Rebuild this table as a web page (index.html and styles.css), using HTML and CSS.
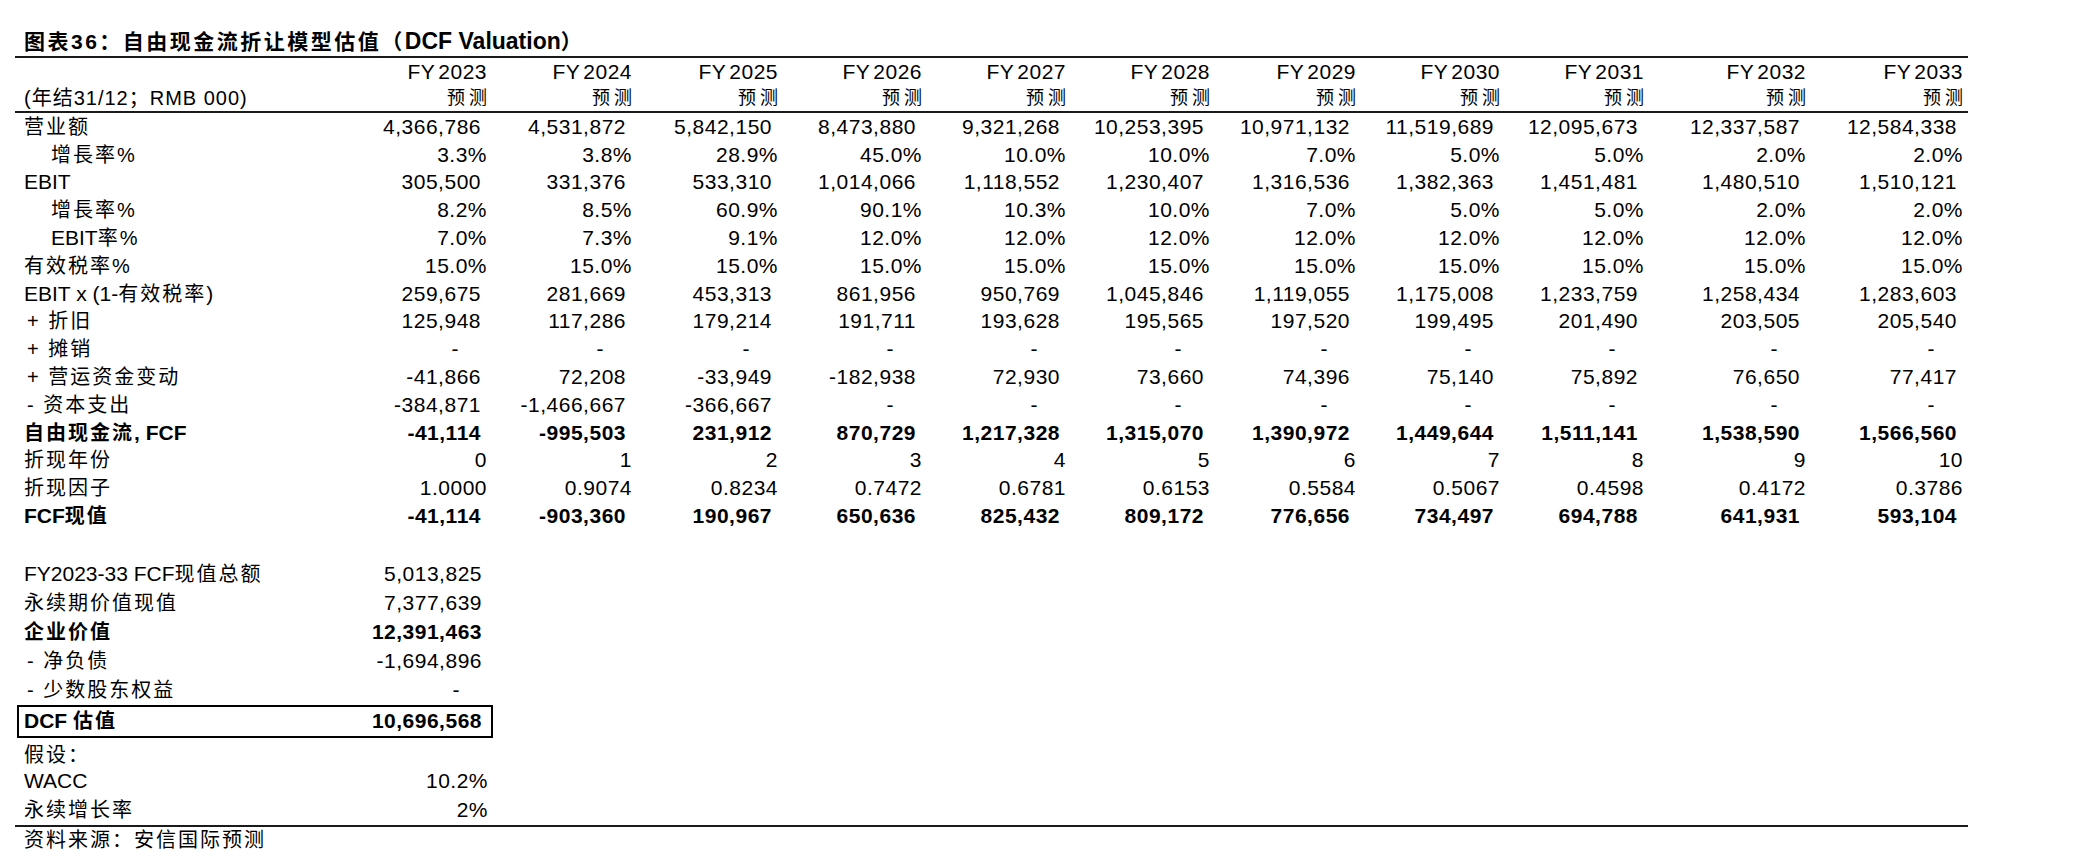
FILE: index.html
```html
<!DOCTYPE html>
<html lang="zh">
<head>
<meta charset="UTF-8" />
<title>自由现金流折让模型估值（DCF Valuation）</title>
<link rel="stylesheet" href="styles.css">
</head>
<body>

<div class="report">
  <h1 class="title">图表36：自由现金流折让模型估值（<span class="lat">DCF Valuation</span>）</h1>

  <!-- main forecast table -->
  <table class="dcf">
    <colgroup>
      <col class="c-label"><col class="c145"><col class="c145"><col class="c146"><col class="c144"><col class="c144"><col class="c144"><col class="c146"><col class="c144"><col class="c144"><col class="c162"><col class="c157">
    </colgroup>
    <thead>
      <tr class="yr">
        <th class="lbl"></th>
        <th>FY 2023</th><th>FY 2024</th><th>FY 2025</th><th>FY 2026</th><th>FY 2027</th><th>FY 2028</th><th>FY 2029</th><th>FY 2030</th><th>FY 2031</th><th>FY 2032</th><th>FY 2033</th>
      </tr>
      <tr class="fc">
        <th class="lbl unit">(年结31/12；RMB 000)</th>
        <th>预测</th><th>预测</th><th>预测</th><th>预测</th><th>预测</th><th>预测</th><th>预测</th><th>预测</th><th>预测</th><th>预测</th><th>预测</th>
      </tr>
    </thead>
    <tbody>
      <tr>
        <td class="lbl">营业额</td>
        <td class="n">4,366,786</td><td class="n">4,531,872</td><td class="n">5,842,150</td><td class="n">8,473,880</td><td class="n">9,321,268</td><td class="n">10,253,395</td><td class="n">10,971,132</td><td class="n">11,519,689</td><td class="n">12,095,673</td><td class="n">12,337,587</td><td class="n">12,584,338</td>
      </tr>
      <tr>
        <td class="lbl in">增長率%</td>
        <td>3.3%</td><td>3.8%</td><td>28.9%</td><td>45.0%</td><td>10.0%</td><td>10.0%</td><td>7.0%</td><td>5.0%</td><td>5.0%</td><td>2.0%</td><td>2.0%</td>
      </tr>
      <tr>
        <td class="lbl"><span class="lat">EBIT</span></td>
        <td class="n">305,500</td><td class="n">331,376</td><td class="n">533,310</td><td class="n">1,014,066</td><td class="n">1,118,552</td><td class="n">1,230,407</td><td class="n">1,316,536</td><td class="n">1,382,363</td><td class="n">1,451,481</td><td class="n">1,480,510</td><td class="n">1,510,121</td>
      </tr>
      <tr>
        <td class="lbl in">增長率%</td>
        <td>8.2%</td><td>8.5%</td><td>60.9%</td><td>90.1%</td><td>10.3%</td><td>10.0%</td><td>7.0%</td><td>5.0%</td><td>5.0%</td><td>2.0%</td><td>2.0%</td>
      </tr>
      <tr>
        <td class="lbl in"><span class="lat">EBIT</span>率%</td>
        <td>7.0%</td><td>7.3%</td><td>9.1%</td><td>12.0%</td><td>12.0%</td><td>12.0%</td><td>12.0%</td><td>12.0%</td><td>12.0%</td><td>12.0%</td><td>12.0%</td>
      </tr>
      <tr>
        <td class="lbl">有效税率%</td>
        <td>15.0%</td><td>15.0%</td><td>15.0%</td><td>15.0%</td><td>15.0%</td><td>15.0%</td><td>15.0%</td><td>15.0%</td><td>15.0%</td><td>15.0%</td><td>15.0%</td>
      </tr>
      <tr>
        <td class="lbl"><span class="lat">EBIT x (1-</span>有效税率<span class="lat">)</span></td>
        <td class="n">259,675</td><td class="n">281,669</td><td class="n">453,313</td><td class="n">861,956</td><td class="n">950,769</td><td class="n">1,045,846</td><td class="n">1,119,055</td><td class="n">1,175,008</td><td class="n">1,233,759</td><td class="n">1,258,434</td><td class="n">1,283,603</td>
      </tr>
      <tr>
        <td class="lbl sign">+ 折旧</td>
        <td class="n">125,948</td><td class="n">117,286</td><td class="n">179,214</td><td class="n">191,711</td><td class="n">193,628</td><td class="n">195,565</td><td class="n">197,520</td><td class="n">199,495</td><td class="n">201,490</td><td class="n">203,505</td><td class="n">205,540</td>
      </tr>
      <tr>
        <td class="lbl sign">+ 摊销</td>
        <td class="d">-</td><td class="d">-</td><td class="d">-</td><td class="d">-</td><td class="d">-</td><td class="d">-</td><td class="d">-</td><td class="d">-</td><td class="d">-</td><td class="d">-</td><td class="d">-</td>
      </tr>
      <tr>
        <td class="lbl sign">+ 营运资金变动</td>
        <td class="n">-41,866</td><td class="n">72,208</td><td class="n">-33,949</td><td class="n">-182,938</td><td class="n">72,930</td><td class="n">73,660</td><td class="n">74,396</td><td class="n">75,140</td><td class="n">75,892</td><td class="n">76,650</td><td class="n">77,417</td>
      </tr>
      <tr>
        <td class="lbl sign">- 资本支出</td>
        <td class="n">-384,871</td><td class="n">-1,466,667</td><td class="n">-366,667</td><td class="d">-</td><td class="d">-</td><td class="d">-</td><td class="d">-</td><td class="d">-</td><td class="d">-</td><td class="d">-</td><td class="d">-</td>
      </tr>
      <tr class="strong">
        <td class="lbl">自由现金流<span class="lat">, FCF</span></td>
        <td class="n">-41,114</td><td class="n">-995,503</td><td class="n">231,912</td><td class="n">870,729</td><td class="n">1,217,328</td><td class="n">1,315,070</td><td class="n">1,390,972</td><td class="n">1,449,644</td><td class="n">1,511,141</td><td class="n">1,538,590</td><td class="n">1,566,560</td>
      </tr>
      <tr>
        <td class="lbl">折现年份</td>
        <td>0</td><td>1</td><td>2</td><td>3</td><td>4</td><td>5</td><td>6</td><td>7</td><td>8</td><td>9</td><td>10</td>
      </tr>
      <tr>
        <td class="lbl">折现因子</td>
        <td>1.0000</td><td>0.9074</td><td>0.8234</td><td>0.7472</td><td>0.6781</td><td>0.6153</td><td>0.5584</td><td>0.5067</td><td>0.4598</td><td>0.4172</td><td>0.3786</td>
      </tr>
      <tr class="strong">
        <td class="lbl"><span class="lat">FCF</span>现值</td>
        <td class="n">-41,114</td><td class="n">-903,360</td><td class="n">190,967</td><td class="n">650,636</td><td class="n">825,432</td><td class="n">809,172</td><td class="n">776,656</td><td class="n">734,497</td><td class="n">694,788</td><td class="n">641,931</td><td class="n">593,104</td>
      </tr>
    </tbody>
  </table>

  <!-- valuation summary -->
  <table class="summary">
    <colgroup>
      <col class="s-label"><col class="s-value">
    </colgroup>
    <tbody>
      <tr><td class="lbl"><span class="lat">FY2023-33 FCF</span>现值总额</td><td class="n">5,013,825</td></tr>
      <tr><td class="lbl">永续期价值现值</td><td class="n">7,377,639</td></tr>
      <tr class="strong"><td class="lbl">企业价值</td><td class="n">12,391,463</td></tr>
      <tr><td class="lbl sign">- 净负债</td><td class="n">-1,694,896</td></tr>
      <tr><td class="lbl sign">- 少数股东权益</td><td class="d">-</td></tr>
      <tr class="strong total"><td class="lbl"><span class="lat">DCF </span>估值</td><td class="n">10,696,568</td></tr>
      <tr class="note"><td class="lbl">假设：</td><td></td></tr>
      <tr class="wacc"><td class="lbl"><span class="lat">WACC</span></td><td>10.2%</td></tr>
      <tr class="growth"><td class="lbl">永续增长率</td><td>2%</td></tr>
    </tbody>
  </table>

  <p class="source">资料来源：安信国际预测</p>
</div>

</body>
</html>
```

FILE: styles.css
```css
body {
  margin: 0;
  background: #fff;
  color: #000;
  font-family: "Liberation Sans", "Noto Sans CJK SC", sans-serif;
}
.report {
  width: 1953px;
  margin-left: 15px;
  padding-top: 27px;
}
.title {
  margin: 0;
  padding-left: 9px;
  font-size: 21px;
  line-height: 29px;
  font-weight: bold;
  letter-spacing: 2.5px;
}
.title .lat {
  font-size: 23px;
  letter-spacing: 0;
}
.lat {
  letter-spacing: 0;
}
.lbl .lat {
  font-size: 21px;
}
table {
  border-collapse: separate;
  border-spacing: 0;
  table-layout: fixed;
}
th, td {
  padding: 0 5px 0 0;
  font-weight: normal;
  font-size: 21px;
  letter-spacing: 0.5px;
  line-height: 24px;
  text-align: right;
  white-space: nowrap;
  vertical-align: middle;
}
.lbl {
  text-align: left;
  padding-left: 9px;
  font-size: 20px;
  letter-spacing: 2px;
}
.in {
  padding-left: 36px;
}
.sign {
  padding-left: 12px;
}
.n {
  padding-right: 11px;
}
.d {
  padding-right: 33px;
}
.strong td {
  font-weight: bold;
}

/* main table */
.dcf {
  width: 1953px;
}
.c-label { width: 332px; }
.c144 { width: 144px; }
.c145 { width: 145px; }
.c146 { width: 146px; }
.c157 { width: 157px; }
.c162 { width: 162px; }

.dcf .yr th {
  border-top: 2px solid #1a1a1a;
  height: 27px;
  word-spacing: -3px;
}
.dcf .fc th {
  border-bottom: 2px solid #1a1a1a;
  height: 26px;
  font-size: 18px;
  letter-spacing: 4px;
  padding-right: 1px;
}
.dcf .fc th.unit {
  font-size: 20px;
  letter-spacing: 1px;
  padding-left: 9px;
}
.dcf tbody tr {
  height: 27.8px;
}

/* summary under the table */
.summary {
  width: 476px;
  margin: 30px 0 0 2px;
}
.s-label { width: 330px; }
.s-value { width: 146px; }
.summary tr {
  height: 29px;
}
.summary .lbl {
  padding-left: 7px;
}
.summary .sign {
  padding-left: 10px;
}
.summary .total td {
  height: 29px;
  border-top: 2px solid #000;
  border-bottom: 2px solid #000;
}
.summary .total td:first-child {
  border-left: 2px solid #000;
  padding-left: 5px;
}
.summary .total td:last-child {
  border-right: 2px solid #000;
  padding-right: 9px;
}
.summary .note td {
  height: 28px;
  vertical-align: bottom;
}
.summary .wacc td {
  height: 20px;
}
.summary .growth td {
  height: 29px;
}

.source {
  margin: 0;
  border-top: 2px solid #1a1a1a;
  padding-left: 9px;
  font-size: 20px;
  line-height: 26px;
  letter-spacing: 2px;
}
```
